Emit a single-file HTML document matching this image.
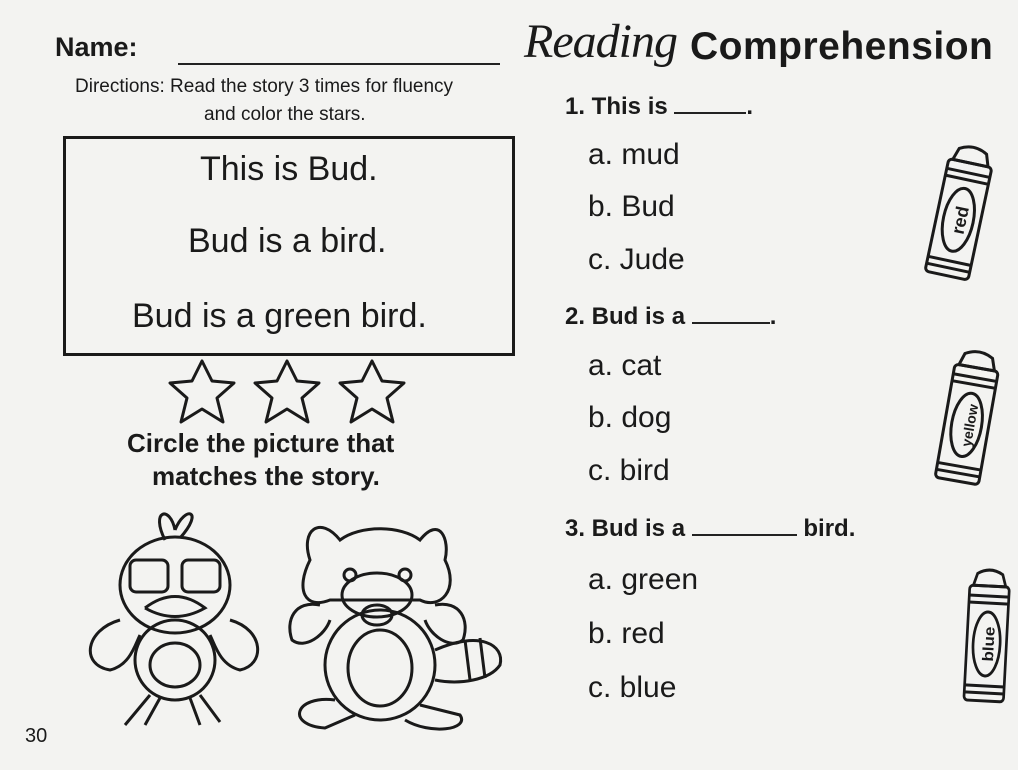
<!DOCTYPE html>
<html><head><meta charset="utf-8"><style>
body{margin:0;width:1018px;height:770px;overflow:hidden;background:#f3f3f1;font-family:"Liberation Sans",sans-serif;color:#1a1a1a;position:relative}
.a{position:absolute;white-space:nowrap}
.b{font-weight:bold}
.opt{font-size:30px;left:588px}
.q{font-size:24px;font-weight:bold;left:565px}
</style></head><body>
<div class="a b" style="left:55px;top:32px;font-size:27px">Name:</div>
<div class="a" style="left:178px;top:63px;width:322px;border-top:2px solid #222"></div>
<div class="a" style="left:524px;top:14px;font-size:48px;font-family:'Liberation Serif',serif;font-style:italic;font-weight:normal;letter-spacing:-1px">Reading</div>
<div class="a b" style="left:690px;top:25px;font-size:39px;letter-spacing:0.5px">Comprehension</div>
<div class="a" style="left:75px;top:76px;font-size:19px">Directions: Read the story 3 times for fluency</div>
<div class="a" style="left:204px;top:104px;font-size:19px">and color the stars.</div>
<div class="a" style="left:63px;top:136px;width:446px;height:214px;border:3px solid #1a1a1a"></div>
<div class="a" style="left:200px;top:150px;font-size:34px">This is Bud.</div>
<div class="a" style="left:188px;top:222px;font-size:34px">Bud is a bird.</div>
<div class="a" style="left:132px;top:297px;font-size:34px">Bud is a green bird.</div>
<svg class="a" style="left:165px;top:358px" width="250" height="70" viewBox="0 0 250 70" fill="none" stroke="#1a1a1a" stroke-width="3" stroke-linejoin="round">
<g id="s"><path d="M37 3 L47 23 L69 25 L52 40 L58 64 L37 51 L16 64 L22 40 L5 25 L27 23 Z"/></g>
<use href="#s" x="85"/><use href="#s" x="170"/></svg>
<div class="a b" style="left:127px;top:428px;font-size:26px">Circle the picture that</div>
<div class="a b" style="left:152px;top:461px;font-size:26px">matches the story.</div>
<svg class="a" style="left:80px;top:500px" width="430" height="235" viewBox="0 0 430 235" fill="none" stroke="#1a1a1a" stroke-width="3">
<path d="M85 40 C70 10 90 5 95 30 M95 30 C105 5 125 10 100 38"/>
<ellipse cx="95" cy="85" rx="55" ry="48"/>
<rect x="50" y="60" width="38" height="32" rx="6"/><rect x="102" y="60" width="38" height="32" rx="6"/>
<path d="M65 108 Q95 85 125 108 Q95 125 65 108"/>
<path d="M40 120 C5 130 0 165 30 170 C50 165 55 145 60 135"/>
<path d="M150 120 C185 130 185 165 160 170 C140 165 135 145 130 135"/>
<ellipse cx="95" cy="160" rx="40" ry="40"/><ellipse cx="95" cy="165" rx="25" ry="22"/>
<path d="M70 195 L45 225 M80 198 L65 225 M110 198 L120 225 M120 195 L140 222"/>
<path d="M230 60 C220 30 240 15 260 40 C280 25 320 25 340 40 C360 15 370 40 365 60 C380 90 360 110 340 100 L250 100 C225 110 215 90 230 60Z"/>
<circle cx="270" cy="75" r="6"/><circle cx="325" cy="75" r="6"/>
<ellipse cx="297" cy="95" rx="35" ry="22"/><ellipse cx="297" cy="115" rx="15" ry="10"/>
<path d="M240 105 C215 100 205 120 212 140 C225 150 245 135 250 120"/>
<path d="M355 105 C380 100 390 120 383 140 C370 150 350 135 345 120"/>
<ellipse cx="300" cy="165" rx="55" ry="55"/><ellipse cx="300" cy="168" rx="32" ry="38"/>
<path d="M355 150 C400 130 425 145 420 165 C410 180 380 185 355 180"/>
<path d="M385 140 L390 180 M400 138 L405 178"/>
<path d="M255 200 C215 195 205 225 245 228 L275 215 M340 205 L380 215 C390 230 350 235 325 220"/>
</svg>
<div class="a" style="left:25px;top:725px;font-size:20px">30</div>
<div class="a q" style="top:93px">1. This is <span style="display:inline-block;width:72px;border-bottom:2px solid #222"></span>.</div>
<div class="a opt" style="top:138px">a. mud</div>
<div class="a opt" style="top:190px">b. Bud</div>
<div class="a opt" style="top:243px">c. Jude</div>
<div class="a q" style="top:303px">2. Bud is a <span style="display:inline-block;width:78px;border-bottom:2px solid #222"></span>.</div>
<div class="a opt" style="top:349px">a. cat</div>
<div class="a opt" style="top:401px">b. dog</div>
<div class="a opt" style="top:454px">c. bird</div>
<div class="a q" style="top:515px">3. Bud is a <span style="display:inline-block;width:105px;border-bottom:2px solid #222"></span> bird.</div>
<div class="a opt" style="top:563px">a. green</div>
<div class="a opt" style="top:617px">b. red</div>
<div class="a opt" style="top:671px">c. blue</div>
<svg class="a" style="left:0;top:0" width="1018" height="770" fill="none" stroke="#1a1a1a" stroke-width="3">
<defs><g id="c"><path d="M-18 -50 L-14 -62 Q0 -70 14 -62 L18 -50 Z"/><rect x="-22" y="-50" width="44" height="115" rx="4"/><path d="M-22 -40 H22 M-22 -33 H22 M-22 50 H22 M-22 57 H22"/><ellipse cx="0" cy="8" rx="15" ry="32"/></g></defs>
<g transform="translate(960,212) rotate(12)"><use href="#c"/><text x="-8" y="8" transform="rotate(-90)" text-anchor="middle" font-size="18" font-weight="bold" fill="#1a1a1a" stroke="none" font-family="Liberation Sans">red</text></g>
<g transform="translate(968,417) rotate(10)"><use href="#c"/><text x="-8" y="8" transform="rotate(-90)" text-anchor="middle" font-size="14" font-weight="bold" fill="#1a1a1a" stroke="none" font-family="Liberation Sans">yellow</text></g>
<g transform="translate(987,636) rotate(3) scale(0.9,1)"><use href="#c"/><text x="-8" y="8" transform="rotate(-90)" text-anchor="middle" font-size="17" font-weight="bold" fill="#1a1a1a" stroke="none" font-family="Liberation Sans">blue</text></g>
</svg>
</body></html>
